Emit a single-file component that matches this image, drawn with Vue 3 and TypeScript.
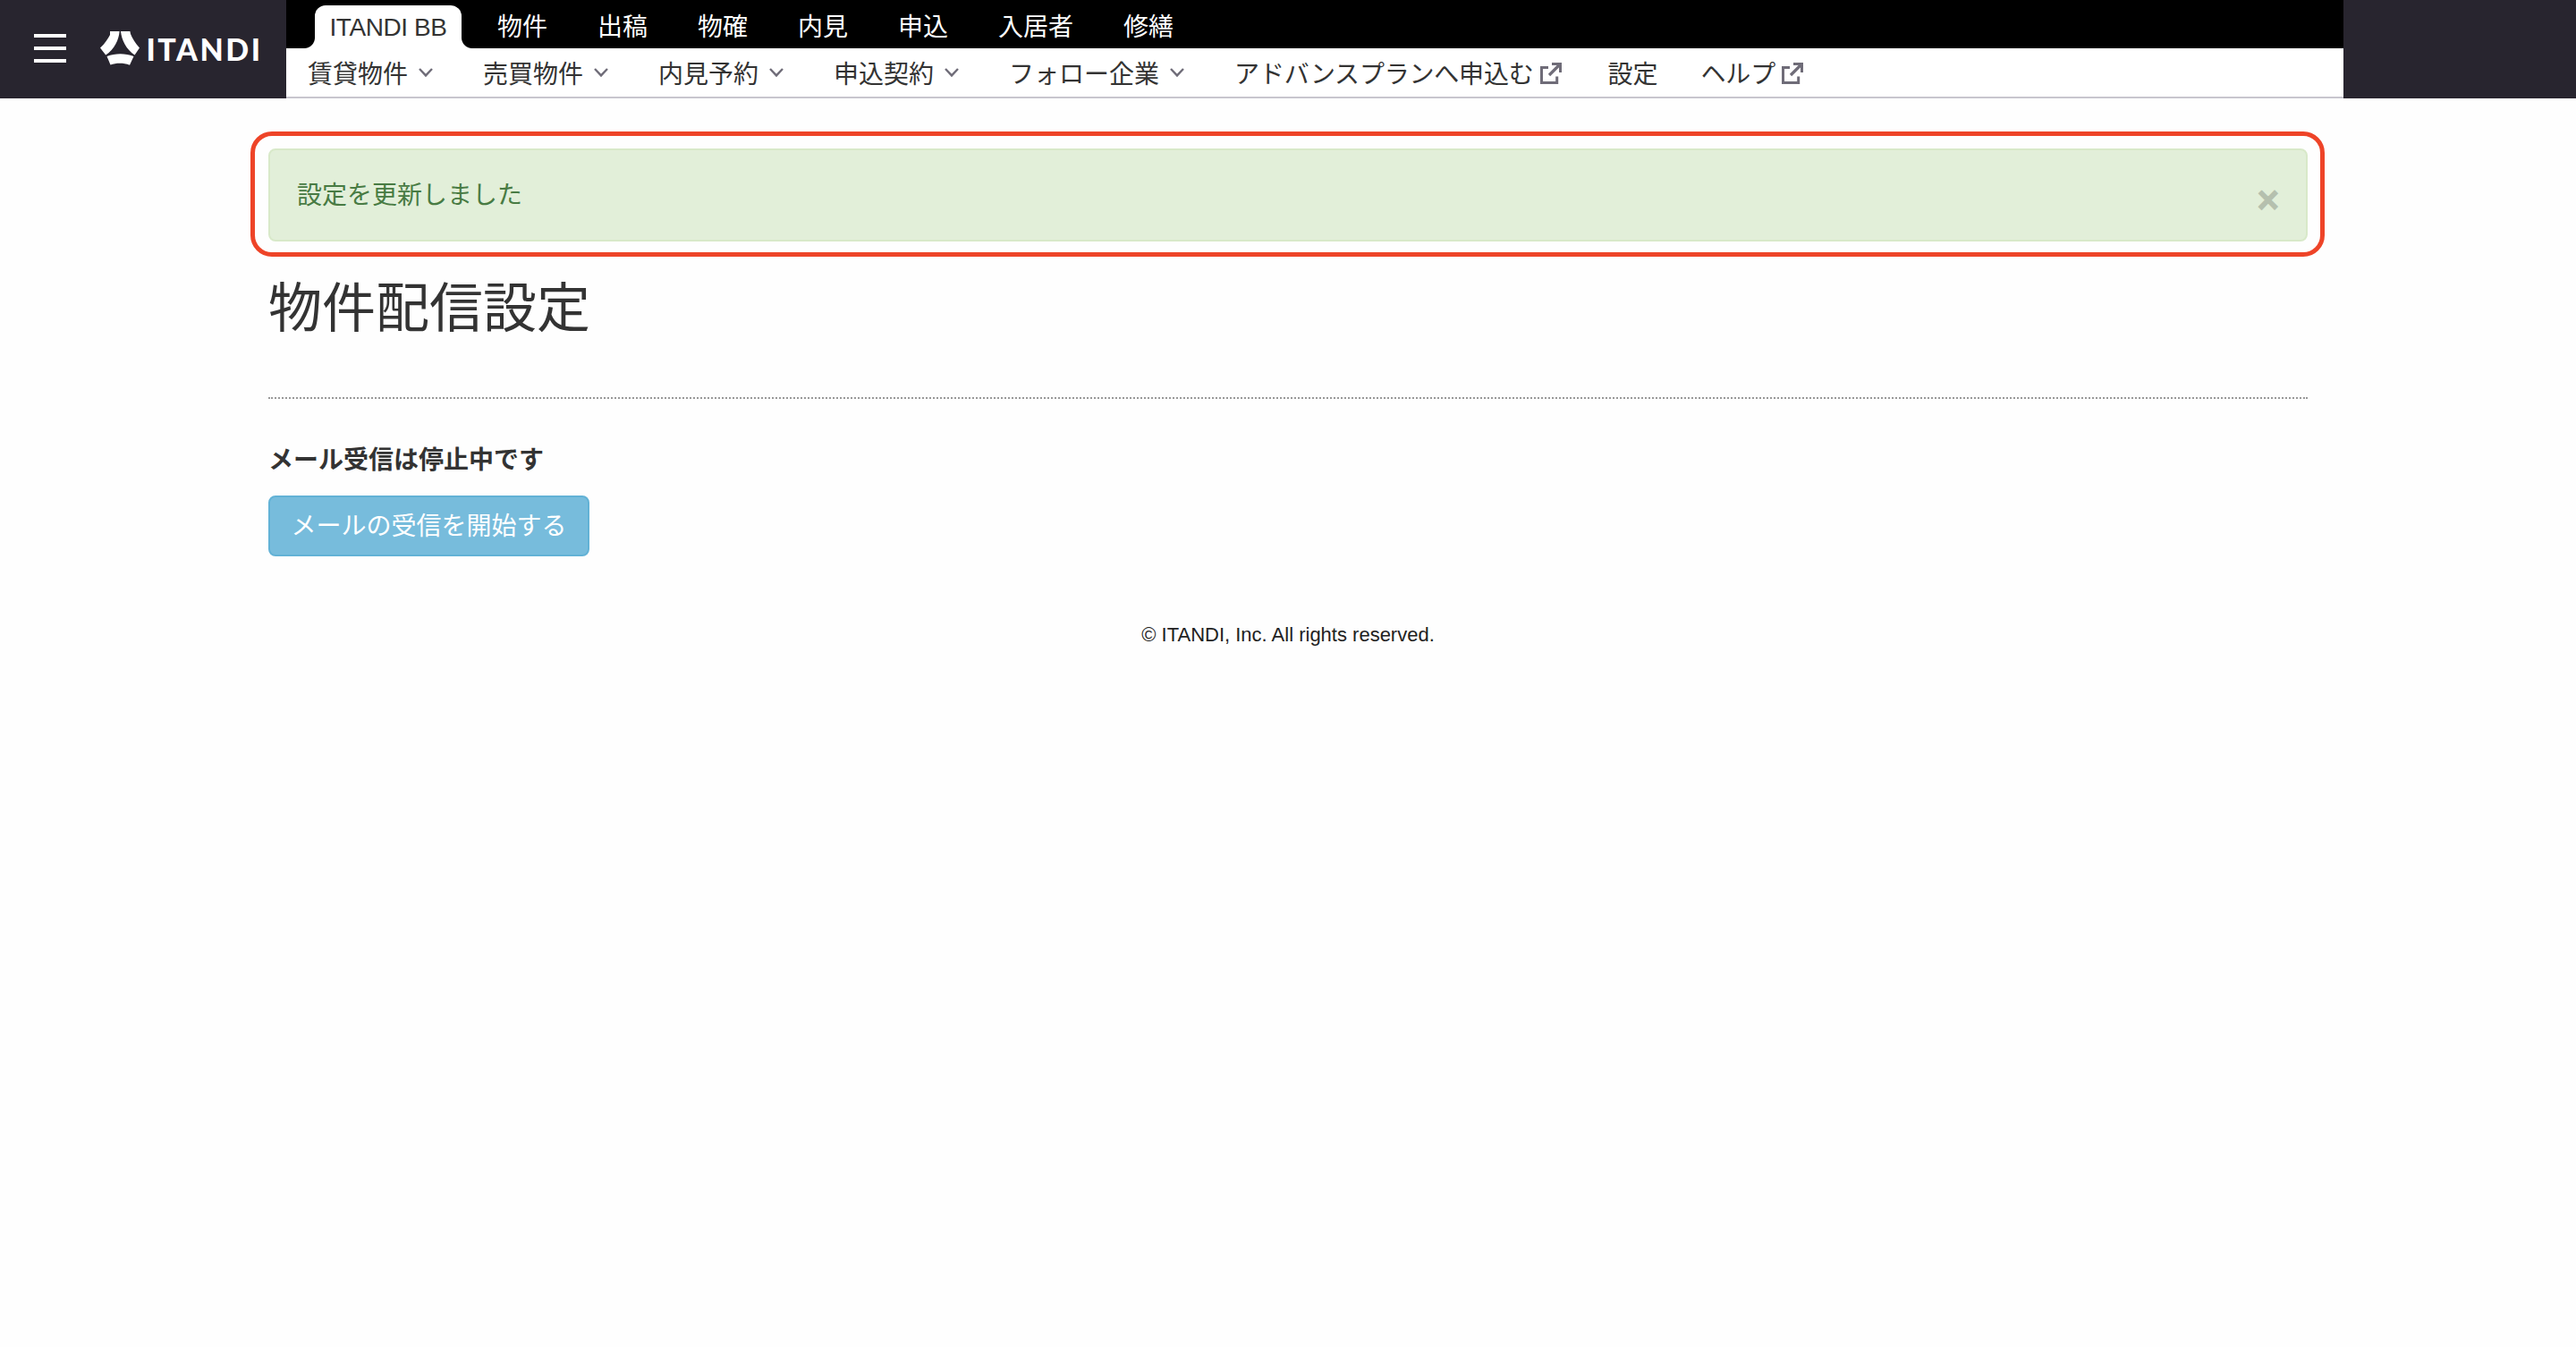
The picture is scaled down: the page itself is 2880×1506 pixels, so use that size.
<script setup lang="ts">
interface SubItem {
  label: string
  icon?: 'chevron' | 'external'
}

const products: string[] = ['物件', '出稿', '物確', '内見', '申込', '入居者', '修繕']

const subItems: SubItem[] = [
  { label: '賃貸物件', icon: 'chevron' },
  { label: '売買物件', icon: 'chevron' },
  { label: '内見予約', icon: 'chevron' },
  { label: '申込契約', icon: 'chevron' },
  { label: 'フォロー企業', icon: 'chevron' },
  { label: 'アドバンスプランへ申込む', icon: 'external' },
  { label: '設定' },
  { label: 'ヘルプ', icon: 'external' },
]
</script>

<template>
  <div class="page">
    <header class="header">
      <div class="brand">
        <button class="burger" aria-label="menu">
          <span></span><span></span><span></span>
        </button>
        <svg class="logo" width="180" height="44" viewBox="0 0 180 44">
          <g fill="#fff">
            <path d="M11 3 H21.6 C21 12 16 23 6.2 29.6 L0 21.5 C5 17 9 11 11 7 Z" />
            <path d="M23 3 H33.4 L34 6 C36 11 39 16 44 21.5 L38.6 29.6 C29 23 24 13 23 3 Z" />
            <path d="M7.5 31 C17 27.2 28 27.2 37.5 31 L33 40.8 C26 38.2 18 38.2 11.5 40.6 Z" />
          </g>
          <text class="wordmark" x="51.5" y="35.7" textLength="127.5" lengthAdjust="spacing">ITANDI</text>
        </svg>
      </div>
      <div class="navs">
        <nav class="products">
          <a class="tab">ITANDI BB</a>
          <a v-for="p in products" :key="p" class="product">{{ p }}</a>
        </nav>
        <nav class="subnav">
          <a v-for="item in subItems" :key="item.label" class="sub" :class="item.icon">
            <span class="label">{{ item.label }}</span>
            <svg v-if="item.icon === 'chevron'" class="chevron-icon" width="16" height="12" viewBox="0 0 16 12">
              <path d="M1 2 L8 9.4 L15 2" fill="none" stroke="#6f6c78" stroke-width="2.4" />
            </svg>
            <svg v-else-if="item.icon === 'external'" class="external-icon" width="24" height="24" viewBox="0 0 24 24">
              <path d="M9 5.5 H1.5 V22.5 H18.7 V15.5" fill="none" stroke="#6f6c78" stroke-width="3" />
              <path d="M10 14 L21.5 2.5" fill="none" stroke="#6f6c78" stroke-width="3.2" />
              <path d="M13 0 H24 V11 H21 V3 H13 Z" fill="#6f6c78" />
            </svg>
          </a>
        </nav>
      </div>
    </header>

    <main class="content">
      <div class="highlight">
        <div class="alert">
          <span>設定を更新しました</span>
          <button class="close" aria-label="close">×</button>
        </div>
      </div>
      <h1>物件配信設定</h1>
      <hr />
      <p class="status">メール受信は停止中です</p>
      <button class="start">メールの受信を開始する</button>
    </main>

    <footer><span>© ITANDI, Inc. All rights reserved.</span></footer>
  </div>
</template>

<style>
body {
  background: #fff;
}
</style>

<style scoped>
.page {
  min-height: 1506px;
  box-sizing: border-box;
  background: #fefefe;
  color: #333;
  font-family: "Liberation Sans", "Noto Sans CJK JP", sans-serif;
  font-size: 28px;
}
button {
  font: inherit;
  margin: 0;
  padding: 0;
  border: 0;
  background: none;
}
.header {
  display: flex;
  height: 110px;
  background: #28252f;
}
.brand {
  display: flex;
  align-items: center;
  box-sizing: border-box;
  width: 320px;
  padding-left: 38px;
}
.burger {
  display: flex;
  flex-direction: column;
  gap: 10px;
  width: 36px;
  margin: 0 38px 2px 0;
}
.burger span {
  height: 4px;
  background: #fff;
}
.logo {
  display: block;
  margin-top: -2px;
}
.wordmark {
  fill: #fff;
  font-family: Lato, sans-serif;
  font-weight: 900;
  font-size: 34px;
}
.navs {
  display: flex;
  flex-direction: column;
  width: 2300px;
  background: #fff;
}
.products {
  display: flex;
  box-sizing: border-box;
  height: 54px;
  padding: 6px 0 0 32px;
  background: #000;
  color: #fff;
  line-height: 50px;
}
.tab {
  position: relative;
  box-sizing: border-box;
  width: 164px;
  height: 48px;
  margin-right: 40px;
  border-radius: 12px 12px 0 0;
  background: #fff;
  color: #333;
  text-align: center;
  letter-spacing: -0.4px;
  white-space: nowrap;
}
.tab::before,
.tab::after {
  content: "";
  position: absolute;
  bottom: 0;
  width: 12px;
  height: 12px;
}
.tab::before {
  right: 100%;
  background: radial-gradient(circle at 0 0, #000 11.5px, #fff 12.5px);
}
.tab::after {
  left: 100%;
  background: radial-gradient(circle at 100% 0, #000 11.5px, #fff 12.5px);
}
.product {
  margin-right: 56px;
}
.subnav {
  display: flex;
  gap: 48px;
  box-sizing: border-box;
  height: 56px;
  padding-left: 24px;
  border-bottom: 2px solid #c8c6ce;
  line-height: 54px;
}
.sub {
  display: flex;
  align-items: center;
}
.label {
  height: 54px;
  padding-top: 3px;
  box-sizing: border-box;
}
.external .label {
  letter-spacing: -0.2px;
}
.chevron-icon {
  margin: 0 8px 0 12px;
}
.external-icon {
  margin: 2px 4px 0 7px;
}
.content {
  display: flow-root;
  width: 2280px;
  margin: 0 auto;
}
.highlight {
  margin: 37px -19px 0 -20px;
  padding: 14px 14px 12px 15px;
  border: 5px solid #ee4428;
  border-radius: 24px;
}
.alert {
  display: flex;
  justify-content: space-between;
  box-sizing: border-box;
  height: 104px;
  padding: 31px 30px 0 30px;
  border: 2px solid #d8e9c9;
  border-radius: 8px;
  background: #e2efd9;
  color: #487b43;
  line-height: 40px;
}
.close {
  height: 40px;
  margin-top: 5px;
  color: #b5c0ae;
  font-size: 42px;
  font-weight: 700;
  line-height: 40px;
  -webkit-text-stroke: 1px #b5c0ae;
}
h1 {
  margin: 26px 0 0;
  font-size: 60px;
  font-weight: 400;
  line-height: 66px;
}
hr {
  margin: 65px 0 0;
  border: 0;
  border-top: 2px dotted #999;
}
.status {
  margin: 49px 0 0;
  font-weight: 700;
  line-height: 40px;
}
.start {
  display: block;
  box-sizing: border-box;
  width: 359px;
  height: 68px;
  margin-top: 19px;
  padding-top: 2px;
  border: 2px solid #62b2d6;
  border-radius: 8px;
  background: #77bcdc;
  color: #fff;
  line-height: 60px;
}
footer {
  margin-top: 73px;
  color: #222;
  font-size: 22px;
  line-height: 30px;
  text-align: center;
}
</style>
